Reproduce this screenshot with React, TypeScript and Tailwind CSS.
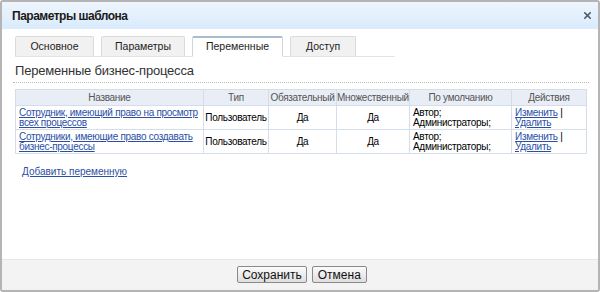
import React from 'react';
import { X } from 'lucide-react';

const tabs = ['Основное', 'Параметры', 'Переменные', 'Доступ'];
const tabWidths = ['w-[79px]', 'w-[84px]', 'w-[91px]', 'w-[66px]'];

const rows = [
  { name: ['Сотрудник, имеющий право на просмотр', 'всех процессов'] },
  { name: ['Сотрудники, имеющие право создавать', 'бизнес-процессы'] },
];

const App = () => {
  return (
    <div className="w-[600px] h-[292px] bg-white font-['Liberation_Sans',Arial,sans-serif] text-[11px] text-black">
      <div className="h-full flex flex-col border-2 border-[#b4b4b4] rounded-[3px] overflow-hidden">
        {/* header */}
        <div className="h-[27px] shrink-0 flex items-center justify-between pl-[10px] pr-[5px] bg-gradient-to-b from-[#eef5fd] to-[#d9ebfc]">
          <span className="font-bold text-[12px] tracking-[-0.5px] text-[#1a1a1a]">Параметры шаблона</span>
          <X size={11} strokeWidth={3.5} className="text-[#4a5670]" />
        </div>

        {/* body */}
        <div className="flex-1 pl-[13px] pr-[10px] pt-[8px]">
          <div className="flex items-end gap-[7px] border-b border-[#e3e3e3] w-[380px] h-[20px]">
            {tabs.map((t, i) => (
              <div
                key={t}
                className={
                  i === 2
                    ? `${tabWidths[i]} h-[21px] -mb-px flex items-center justify-center bg-white border border-[#cfd6de] border-t-2 border-t-[#a9bccf] border-b-white rounded-t-[2px]`
                    : `${tabWidths[i]} h-[20px] flex items-center justify-center bg-[#f1f1f1] border border-[#dadada] border-b-0 rounded-t-[2px]`
                }
              >
                <span className="text-[10.5px] text-[#222]">{t}</span>
              </div>
            ))}
          </div>

          <div className="pt-[6px] pb-[3px] leading-[16px] text-[13px] tracking-[-0.2px] text-[#333]">
            Переменные бизнес-процесса
          </div>
          <div className="border-b border-dotted border-[#bbbbbb] w-[576px] -ml-[2px]" />

          <table className="table-fixed mt-[6px] border-collapse border border-[#d4ddea] w-[572px] text-[10px] tracking-[-0.3px]">
            <colgroup>
              <col className="w-[188px]" />
              <col className="w-[65px]" />
              <col className="w-[68px]" />
              <col className="w-[73px]" />
              <col className="w-[102px]" />
              <col />
            </colgroup>
            <thead>
              <tr className="bg-[#e9eef6] text-[#555] h-[16px]">
                <th className="font-normal border border-[#d4ddea] p-0">Название</th>
                <th className="font-normal border border-[#d4ddea] p-0">Тип</th>
                <th className="font-normal border border-[#d4ddea] p-0 whitespace-nowrap">Обязательный</th>
                <th className="font-normal border border-[#d4ddea] p-0 whitespace-nowrap">Множественный</th>
                <th className="font-normal border border-[#d4ddea] p-0">По умолчанию</th>
                <th className="font-normal border border-[#d4ddea] p-0">Действия</th>
              </tr>
            </thead>
            <tbody>
              {rows.map((r, i) => (
                <tr key={i} className="h-[24px] leading-[10px]">
                  <td className="border border-[#d4ddea] px-[3px] py-[1px] whitespace-nowrap">
                    <a href="#" className="text-[#2b4fa5] underline">
                      {r.name[0]}
                      <br />
                      {r.name[1]}
                    </a>
                  </td>
                  <td className="border border-[#d4ddea] px-0 text-center whitespace-nowrap">Пользователь</td>
                  <td className="border border-[#d4ddea] text-center">Да</td>
                  <td className="border border-[#d4ddea] text-center">Да</td>
                  <td className="border border-[#d4ddea] px-[3px] whitespace-nowrap">
                    Автор;
                    <br />
                    Администраторы;
                  </td>
                  <td className="border border-[#d4ddea] px-[3px] whitespace-nowrap">
                    <a href="#" className="text-[#2b4fa5] underline">Изменить</a> |
                    <br />
                    <a href="#" className="text-[#2b4fa5] underline">Удалить</a>
                  </td>
                </tr>
              ))}
            </tbody>
          </table>

          <div className="pt-[9px] pl-[7px]">
            <a href="#" className="text-[#2b4fa5] underline text-[10px]">
              Добавить переменную
            </a>
          </div>
        </div>

        {/* footer */}
        <div className="h-[31px] shrink-0 bg-[#f3f3f3] border-t border-[#e6e6e6] flex items-center justify-center gap-[5px] pb-[1px] pl-[4px]">
          <button className="h-[17px] px-[4px] text-[12px] leading-none border border-[#8a8a8a] rounded-[2px] bg-gradient-to-b from-[#fbfbfb] to-[#dedede] text-[#111]">
            Сохранить
          </button>
          <button className="h-[17px] px-[5px] text-[12px] leading-none border border-[#8a8a8a] rounded-[2px] bg-gradient-to-b from-[#fbfbfb] to-[#dedede] text-[#111]">
            Отмена
          </button>
        </div>
      </div>
    </div>
  );
};

export default App;
